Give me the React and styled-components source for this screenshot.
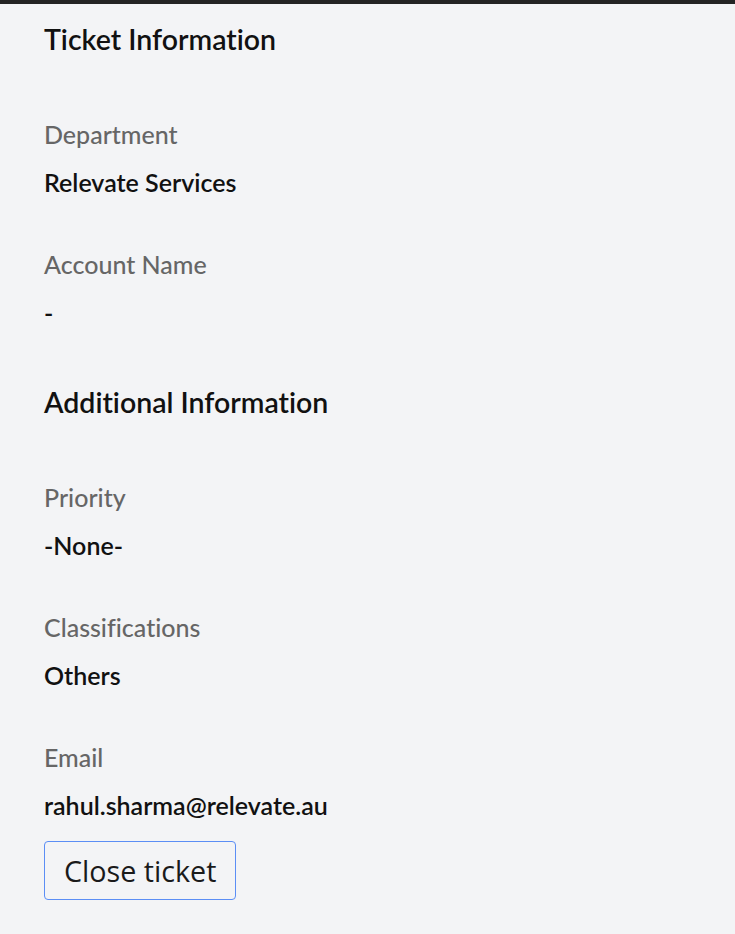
import styled, { createGlobalStyle } from 'styled-components';

const GlobalStyle = createGlobalStyle`
  html, body {
    margin: 0;
    padding: 0;
    background: #f3f4f6;
  }
  body {
    font-family: Lato, "Noto Sans", sans-serif;
    font-variant-ligatures: none;
  }
`;

const TopBar = styled.div`
  height: 4px;
  background: #242424;
`;

const Panel = styled.div`
  padding: 11px 44px 30px;
  display: flex;
  flex-direction: column;
  align-items: flex-start;
`;

const Heading = styled.h2`
  margin: ${(p) => (p.first ? '0' : '42px')} 0 47px;
  font-size: 28.5px;
  font-weight: 600;
  line-height: 48px;
  color: #111;
`;

const Field = styled.div`
  display: flex;
  flex-direction: column;
  & + & {
    margin-top: 34px;
  }
`;

const Label = styled.div`
  font-size: 25px;
  line-height: 48px;
  color: #666;
  font-weight: 500;
`;

const Value = styled.div`
  font-size: 25px;
  line-height: 48px;
  color: #111;
  font-weight: 600;
`;

const CloseButton = styled.button`
  margin-top: 12px;
  height: 59px;
  padding: 0 19px;
  background: #f3f4f6;
  border: 1px solid #5b8ef5;
  border-radius: 4px;
  font-family: "Open Sans", "Noto Sans", sans-serif;
  font-size: 28.7px;
  color: #1a1a1a;
  cursor: pointer;
`;

const ticketInfo = [
  { label: 'Department', value: 'Relevate Services' },
  { label: 'Account Name', value: '-' },
];

const additionalInfo = [
  { label: 'Priority', value: '-None-' },
  { label: 'Classifications', value: 'Others' },
  { label: 'Email', value: 'rahul.sharma@relevate.au' },
];

const App = () => {
  return (
    <>
      <GlobalStyle />
      <TopBar />
      <Panel>
        <Heading first>Ticket Information</Heading>
        {ticketInfo.map((f) => (
          <Field key={f.label}>
            <Label>{f.label}</Label>
            <Value>{f.value}</Value>
          </Field>
        ))}

        <Heading>Additional Information</Heading>
        {additionalInfo.map((f) => (
          <Field key={f.label}>
            <Label>{f.label}</Label>
            <Value>{f.value}</Value>
          </Field>
        ))}

        <CloseButton>Close ticket</CloseButton>
      </Panel>
    </>
  );
};

export default App;
